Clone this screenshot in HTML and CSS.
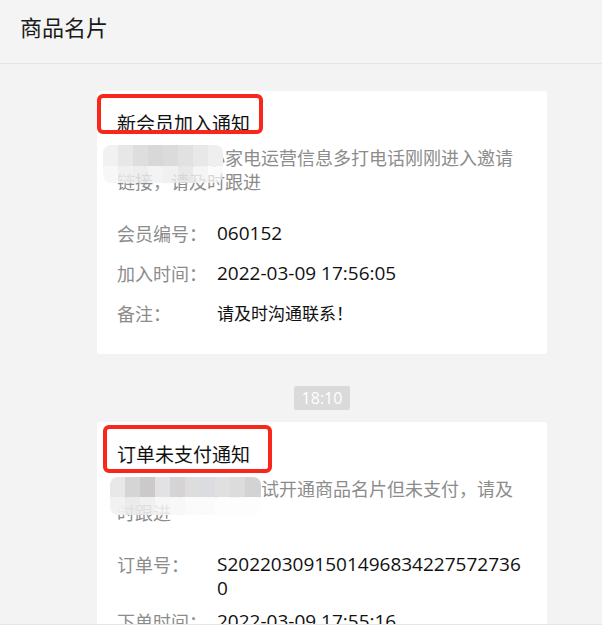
FILE: index.html
```html
<!DOCTYPE html>
<html lang="zh-CN">
<head>
<meta charset="utf-8">
<title>商品名片</title>
<link rel="stylesheet" href="styles.css">
</head>
<body>
<div class="app">
  <header class="topbar">
    <h1 class="topbar-title">商品名片</h1>
  </header>
  <main class="feed">
    <article class="card">
      <h2 class="card-title"><span class="mark mark-a">新会员加入通知</span></h2>
      <p class="card-desc"><span class="mosaic mosaic-a"></span>某某某某在小家电运营信息多打电话刚刚进入邀请链接，请及时跟进</p>
      <dl class="fields">
        <dt>会员编号：</dt><dd>060152</dd>
        <dt>加入时间：</dt><dd>2022-03-09 17:56:05</dd>
        <dt>备注：</dt><dd class="val-text">请及时沟通联系！</dd>
      </dl>
    </article>
    <div class="stamp"><span class="stamp-time">18:10</span></div>
    <article class="card">
      <h2 class="card-title"><span class="mark mark-b">订单未支付通知</span></h2>
      <p class="card-desc"><span class="mosaic mosaic-b"></span>某某某某某某已尝试开通商品名片但未支付，请及时跟进</p>
      <dl class="fields">
        <dt>订单号：</dt><dd class="val-break">S2022030915014968342275727360</dd>
        <dt>下单时间：</dt><dd>2022-03-09 17:55:16</dd>
        <dt>备注：</dt><dd class="val-text">请及时沟通联系！</dd>
      </dl>
    </article>
  </main>
  <footer class="composer"></footer>
</div>
</body>
</html>
```

FILE: styles.css
```css
html, body {
  margin: 0;
  padding: 0;
  height: 100%;
}
body {
  font-family: "Open Sans", "Noto Sans CJK SC", sans-serif;
  background: #f3f3f3;
  color: #111;
}
.app {
  display: flex;
  flex-direction: column;
  height: 100vh;
  overflow: hidden;
}
.topbar {
  box-sizing: border-box;
  height: 64px;
  flex: none;
  padding: 11px 20px 0;
  background: #f4f4f4;
  border-bottom: 1px solid #e5e5e5;
}
.topbar-title {
  margin: 0;
  font-family: "Noto Sans CJK SC", sans-serif;
  font-size: 22px;
  font-weight: 400;
  line-height: 30px;
  color: #1a1a1a;
}
.feed {
  flex: 1;
  min-height: 0;
  overflow: hidden;
  padding: 27px 55px 0 97px;
}
.card {
  background: #fff;
  border-radius: 3px;
  padding: 20px 20px 29px;
}
.card-title {
  margin: 0;
  font-family: "Noto Sans CJK SC", sans-serif;
  font-size: 19px;
  font-weight: 400;
  line-height: 24px;
  color: #111;
}
.mark {
  position: relative;
  display: inline-block;
}
.mark::after {
  content: "";
  position: absolute;
  border: 4px solid #f8261b;
  border-radius: 6px;
}
.mark-a::after {
  left: -20px;
  right: -13px;
  top: -17px;
  bottom: 1px;
}
.mark-b::after {
  left: -14px;
  right: -22px;
  top: -17px;
  bottom: -7px;
}
.card-desc {
  position: relative;
  margin: 10px 0 0;
  font-family: "Noto Sans CJK SC", sans-serif;
  font-size: 18px;
  line-height: 24px;
  color: #8c8c8c;
}
.mosaic {
  position: absolute;
  height: 38px;
  filter: blur(0.6px);
  border-radius: 8px;
}
.mosaic-a {
  left: -14px;
  top: 0;
  width: 120px;
  background:
    linear-gradient(90deg, #f1f1f1 0 15px, #e7e7e7 15px 30px, #dedede 30px 45px, #d8d8d8 45px 60px, #dbdbdb 60px 75px, #e1e1e1 75px 90px, #e8e8e8 90px 105px, #efefef 105px 120px) top / 100% 21px no-repeat,
    linear-gradient(90deg, rgba(247,247,247,.95) 0 15px, rgba(238,238,238,.85) 15px 30px, rgba(234,234,234,.8) 30px 45px, rgba(241,241,241,.8) 45px 60px, rgba(237,237,237,.8) 60px 75px, rgba(228,228,228,.85) 75px 90px, rgba(242,242,242,.8) 90px 105px, rgba(249,249,249,.7) 105px 120px) bottom / 100% 17px no-repeat;
}
.mosaic-b {
  left: -7px;
  top: 1px;
  width: 151px;
  background:
    linear-gradient(90deg, #e8e8e8 0 15px, #d5d5d5 15px 30px, #cbc9c9 30px 45px, #e2e2e4 45px 60px, #d5d3d3 60px 75px, #dddddd 75px 90px, #dadcdf 90px 105px, #e0e0e0 105px 120px, #dcdcdc 120px 135px, #d3d3d3 135px 151px) top / 100% 20px no-repeat,
    linear-gradient(90deg, rgba(241,241,241,.95) 0 15px, rgba(233,233,233,.9) 15px 30px, rgba(237,237,237,.85) 30px 45px, rgba(245,245,245,.85) 45px 60px, rgba(247,247,247,.85) 60px 75px, rgba(250,250,250,.85) 75px 90px, rgba(249,249,249,.75) 90px 105px, rgba(252,252,252,.7) 105px 151px) bottom / 100% 18px no-repeat;
}
.fields {
  display: grid;
  grid-template-columns: 100px 1fr;
  row-gap: 16px;
  margin: 28px 0 0;
  line-height: 24px;
}
.fields dt {
  font-family: "Noto Sans CJK SC", sans-serif;
  font-size: 18px;
  color: #8c8c8c;
}
.fields dd {
  margin: 0;
  font-size: 19px;
  color: #111;
}
.fields .val-text {
  font-family: "Noto Sans CJK SC", sans-serif;
  font-size: 17px;
}
.fields .val-break {
  word-break: break-all;
  margin-bottom: -7px;
}
.stamp {
  display: flex;
  justify-content: center;
  margin: 32px 0 12px;
}
.stamp-time {
  display: inline-block;
  padding: 0 8px;
  height: 24px;
  line-height: 24px;
  font-size: 16px;
  color: #fff;
  background: #dadada;
  border-radius: 2px;
}
.composer {
  flex: none;
  height: 13px;
  background: #fff;
  border-top: 1px solid #e6e6e6;
}
```
